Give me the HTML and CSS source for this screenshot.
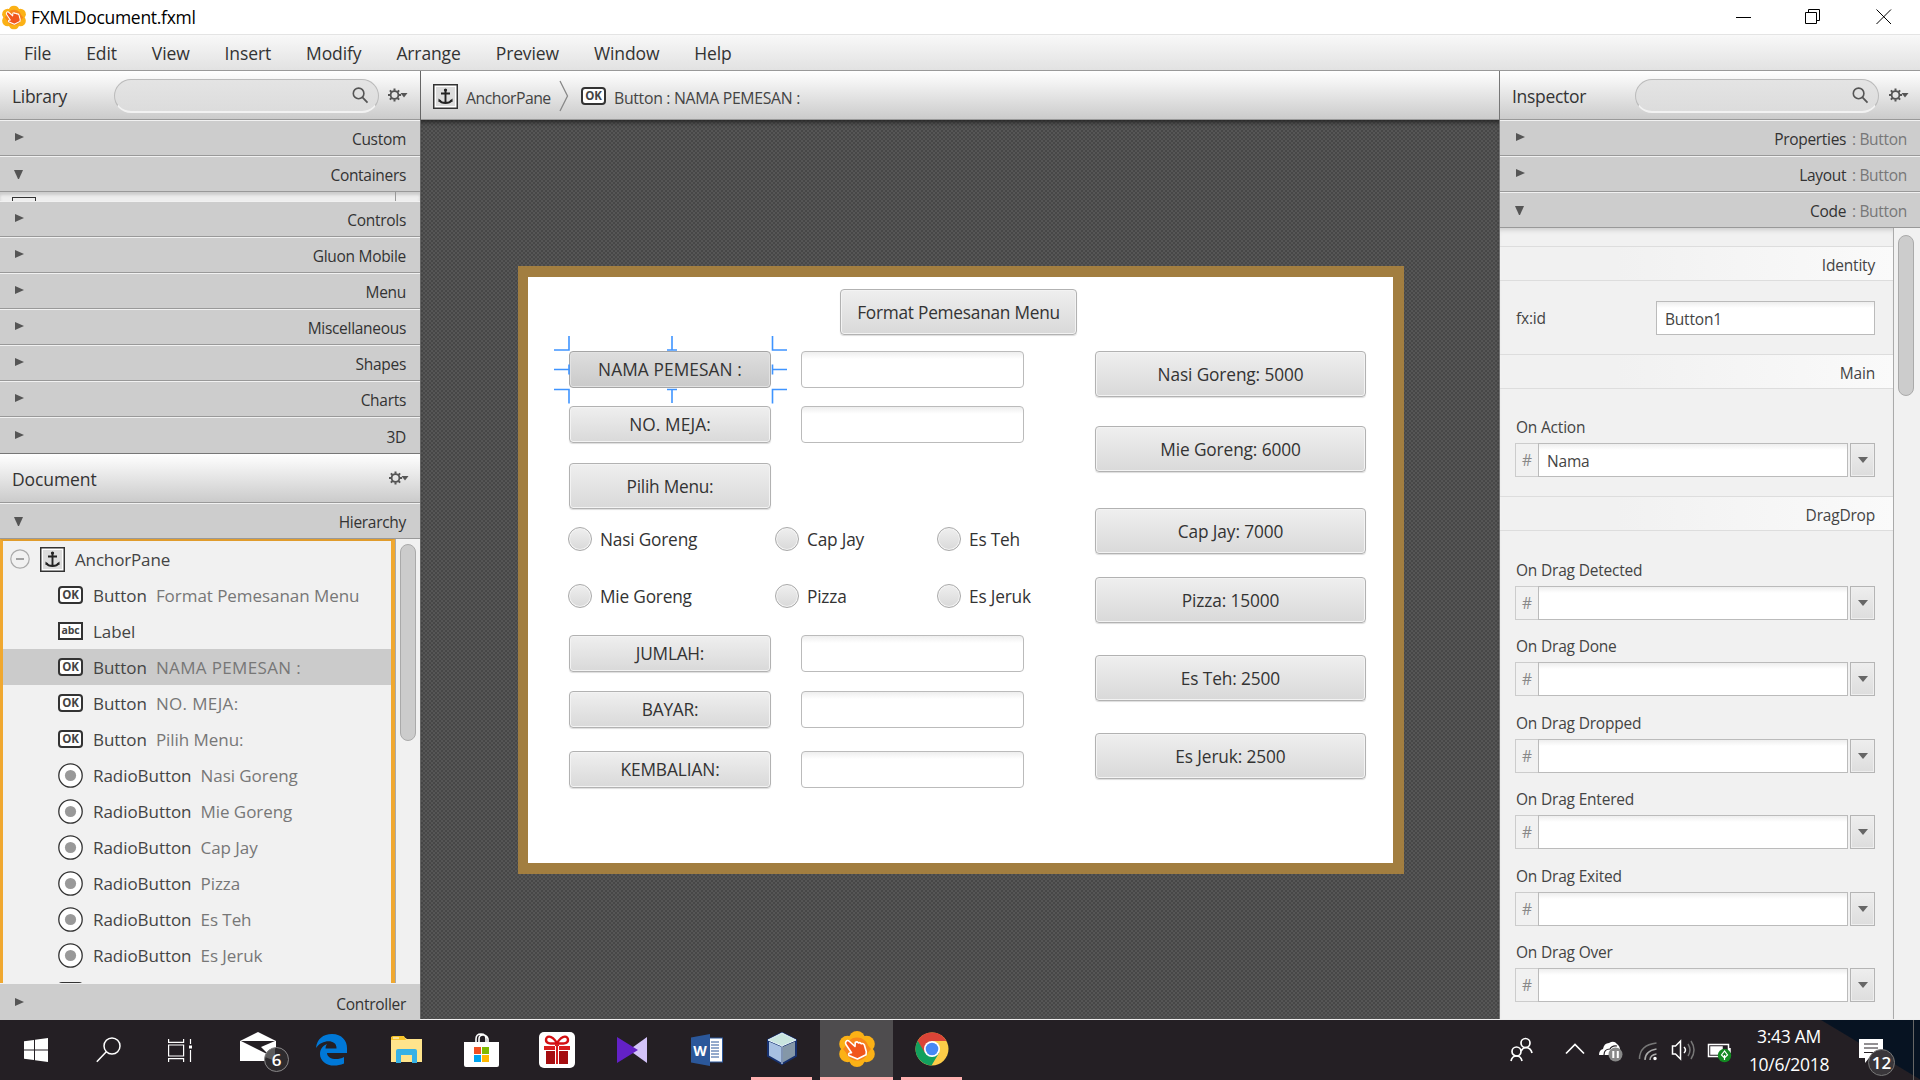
FILE: index.html
```html
<!DOCTYPE html>
<html lang="en">
<head>
<meta charset="utf-8">
<title>FXMLDocument.fxml</title>
<link rel="stylesheet" href="styles.css">
</head>
<body>
<svg width="0" height="0" class="defs">
  <symbol id="search" viewBox="0 0 17 17"><circle cx="6.6" cy="6.4" r="5.3" fill="none" stroke="#555" stroke-width="1.6"/><path d="M10.5 10.4l5 5.2" stroke="#555" stroke-width="1.8"/></symbol>
  <symbol id="gear" viewBox="0 0 20 14"><circle cx="6.5" cy="7" r="3.9" fill="none" stroke="#555" stroke-width="1.8"/><path d="M6.5 .4v2.4M6.5 11.2v2.4M-.1 7h2.4M10.7 7h2.4M1.9 2.4l1.6 1.6M9.5 10l1.6 1.6M11.1 2.4L9.5 4M3.5 10l-1.6 1.6" stroke="#555" stroke-width="2"/><path d="M12.5 5h7l-3.5 4.5z" fill="#555"/></symbol>
  <symbol id="anchor" viewBox="0 0 25 25"><rect x=".75" y=".75" width="23.5" height="23.5" fill="#fff" stroke="#333" stroke-width="1.5"/><rect x="3" y="3" width="19" height="19" fill="#ddd"/><path d="M12.5 5v14M8 9.5h9M6.5 16.3q1.5 2.7 6 2.7t6-2.7" fill="none" stroke="#222" stroke-width="1.9"/><path d="M5.5 14.5v3.5l3-1zM19.5 14.5v3.5l-3-1z" fill="#222"/><circle cx="12.5" cy="6" r="1.6" fill="#222"/></symbol>
  <symbol id="radio" viewBox="0 0 25 25"><circle cx="12.5" cy="12.5" r="11.7" fill="#fff" stroke="#333" stroke-width="1.3"/><circle cx="12.5" cy="12.5" r="5.6" fill="#999"/></symbol>
  <symbol id="gluon" viewBox="0 0 36 36"><g fill="#fbb116"><circle cx="18" cy="8" r="8"/><circle cx="18" cy="28" r="8"/><circle cx="8.5" cy="13" r="8.3"/><circle cx="27.5" cy="13" r="8.3"/><circle cx="8.5" cy="23" r="8.3"/><circle cx="27.5" cy="23" r="8.3"/></g><g fill="#f7861c"><circle cx="18" cy="18" r="11.5"/><path d="M4 18l7-8 0 16zM32 18l-7-8 0 16z"/></g><path d="M7 10.5q1.500-2 3.500 0l5.500 5 .3-4q2-1.500 3 .5 2-1 3 .8 2-.8 3 1l2 7-.3 3-8.500 4.200-2.500-1-6-2.500q-1.500-2.500 2.500-2.800L7 13.500q-1-1.500 0-3z" fill="#f1551c" stroke="#fff" stroke-width="1.600" stroke-linejoin="round"/></symbol>
</svg>

<header class="titlebar">
  <svg class="app-icon" viewBox="0 0 36 36"><use href="#gluon"/></svg>
  <span class="title">FXMLDocument.fxml</span>
  <svg class="window-controls" viewBox="0 0 156 16" fill="none" stroke="#000"><path d="M0 8.500h15"/><path d="M69.500 3.500h11v11h-11zM72.500 3.500v-3h11v11h-3M140.500 .5l14.500 14.500M155 .5l-14.500 14.500"/></svg>
</header>
<nav class="menubar"><span>File</span><span>Edit</span><span>View</span><span>Insert</span><span>Modify</span><span>Arrange</span><span>Preview</span><span>Window</span><span>Help</span></nav>

<main class="workspace">
  <aside class="left">
    <div class="toolbar"><span class="tool-title">Library</span><div class="search"><svg><use href="#search"/></svg></div><svg class="gear"><use href="#gear"/></svg></div>
    <div class="section"><i class="closed"></i><span>Custom</span></div>
    <div class="section"><i class="open"></i><span>Containers</span></div>
    <div class="sliver"><i></i><b></b></div>
    <div class="section"><i class="closed"></i><span>Controls</span></div>
    <div class="section"><i class="closed"></i><span>Gluon Mobile</span></div>
    <div class="section"><i class="closed"></i><span>Menu</span></div>
    <div class="section"><i class="closed"></i><span>Miscellaneous</span></div>
    <div class="section"><i class="closed"></i><span>Shapes</span></div>
    <div class="section"><i class="closed"></i><span>Charts</span></div>
    <div class="section last"><i class="closed"></i><span>3D</span></div>
    <div class="toolbar"><span class="tool-title doc">Document</span><svg class="gear"><use href="#gear"/></svg></div>
    <div class="section"><i class="open"></i><span>Hierarchy</span></div>
    <div class="hierarchy">
      <div class="tree">
        <div class="node root"><svg class="collapse" viewBox="0 0 20 20"><circle cx="10" cy="10" r="9.200" fill="none" stroke="#aaa" stroke-width="1.200"/><path d="M6 10h8" stroke="#777" stroke-width="1.300"/></svg><svg class="icon"><use href="#anchor"/></svg><span>AnchorPane</span></div>
        <div class="node"><b class="ok">OK</b><span>Button</span><em>Format Pemesanan Menu</em></div>
        <div class="node"><b class="ok abc">abc</b><span>Label</span></div>
        <div class="node selected"><b class="ok">OK</b><span>Button</span><em class="caps">NAMA PEMESAN :</em></div>
        <div class="node"><b class="ok">OK</b><span>Button</span><em class="caps">NO. MEJA:</em></div>
        <div class="node"><b class="ok">OK</b><span>Button</span><em>Pilih Menu:</em></div>
        <div class="node"><svg class="icon"><use href="#radio"/></svg><span>RadioButton</span><em>Nasi Goreng</em></div>
        <div class="node"><svg class="icon"><use href="#radio"/></svg><span>RadioButton</span><em>Mie Goreng</em></div>
        <div class="node"><svg class="icon"><use href="#radio"/></svg><span>RadioButton</span><em>Cap Jay</em></div>
        <div class="node"><svg class="icon"><use href="#radio"/></svg><span>RadioButton</span><em>Pizza</em></div>
        <div class="node"><svg class="icon"><use href="#radio"/></svg><span>RadioButton</span><em>Es Teh</em></div>
        <div class="node"><svg class="icon"><use href="#radio"/></svg><span>RadioButton</span><em>Es Jeruk</em></div>
        <div class="node"><b class="ok"></b></div>
      </div>
      <div class="track"><div class="thumb"></div></div>
    </div>
    <div class="section controller"><i class="closed"></i><span>Controller</span></div>
  </aside>

  <section class="center">
    <div class="toolbar crumbs"><svg class="icon"><use href="#anchor"/></svg><span class="c1">AnchorPane</span><svg class="chev" viewBox="0 0 10 32" fill="none" stroke="#888" stroke-width="1.300"><path d="M1 1l7.500 15-7.500 15"/></svg><b class="ok">OK</b><span class="c2">Button : NAMA PEMESAN :</span></div>
    <div class="canvas">
      <div class="stage">
        <div class="btn format">Format Pemesanan Menu</div>
        <div class="btn l nama caps">NAMA PEMESAN :</div><div class="field nama"></div>
        <div class="btn l meja caps">NO. MEJA:</div><div class="field meja"></div>
        <div class="btn l pilih">Pilih Menu:</div>
        <div class="rb col1 row1"><i></i>Nasi Goreng</div><div class="rb col2 row1"><i></i>Cap Jay</div><div class="rb col3 row1"><i></i>Es Teh</div>
        <div class="rb col1 row2"><i></i>Mie Goreng</div><div class="rb col2 row2"><i></i>Pizza</div><div class="rb col3 row2"><i></i>Es Jeruk</div>
        <div class="btn l jumlah">JUMLAH:</div><div class="field jumlah"></div>
        <div class="btn l bayar">BAYAR:</div><div class="field bayar"></div>
        <div class="btn l kembalian">KEMBALIAN:</div><div class="field kembalian"></div>
        <div class="btn r p1">Nasi Goreng: 5000</div>
        <div class="btn r p2">Mie Goreng: 6000</div>
        <div class="btn r p3">Cap Jay: 7000</div>
        <div class="btn r p4">Pizza: 15000</div>
        <div class="btn r p5">Es Teh: 2500</div>
        <div class="btn r p6">Es Jeruk: 2500</div>
        <svg class="handles" viewBox="0 0 234 70" fill="none" stroke="#3f94ff" stroke-width="1.600"><path d="M0 15h15V1M233 15h-14.500V1M0 54.500h15v14M233 54.500h-14.500v14M118 1v14M113 15h10M118 68V54.500M113 54.500h10M0 34.500h15M15 29.500v10M233 34.500h-14.500M218.500 29.500v10"/></svg>
      </div>
    </div>
  </section>

  <aside class="right">
    <div class="toolbar"><span class="tool-title">Inspector</span><div class="search"><svg><use href="#search"/></svg></div><svg class="gear"><use href="#gear"/></svg></div>
    <div class="section"><i class="closed"></i><span>Properties <em>: Button</em></span></div>
    <div class="section"><i class="closed"></i><span>Layout <em>: Button</em></span></div>
    <div class="section"><i class="open"></i><span>Code <em>: Button</em></span></div>
    <div class="inspector">
      <div class="props">
        <div class="band first">Identity</div>
        <div class="fxid"><span>fx:id</span><div class="input">Button1</div></div>
        <div class="band">Main</div>
        <div class="prop lead"><label>On Action</label><div class="combo"><b>#</b><div class="input">Nama</div><i></i></div></div>
        <div class="band">DragDrop</div>
        <div class="prop lead drag"><label>On Drag Detected</label><div class="combo"><b>#</b><div class="input"></div><i></i></div></div>
        <div class="prop"><label>On Drag Done</label><div class="combo"><b>#</b><div class="input"></div><i></i></div></div>
        <div class="prop"><label>On Drag Dropped</label><div class="combo"><b>#</b><div class="input"></div><i></i></div></div>
        <div class="prop"><label>On Drag Entered</label><div class="combo"><b>#</b><div class="input"></div><i></i></div></div>
        <div class="prop"><label>On Drag Exited</label><div class="combo"><b>#</b><div class="input"></div><i></i></div></div>
        <div class="prop"><label>On Drag Over</label><div class="combo"><b>#</b><div class="input"></div><i></i></div></div>
      </div>
      <div class="track"><div class="thumb"></div></div>
    </div>
  </aside>
</main>

<footer class="taskbar">
  <div class="task"><svg width="24" height="24" viewBox="0 0 24 24" fill="#fff"><path d="M0 3.300l10-1.400v9.600H0zM11 1.800L24 0v11.500H11zM0 12.500h10v9.600L0 20.700zM11 12.500h13V24l-13-1.800z"/></svg></div>
  <div class="task find"><svg width="26" height="26" viewBox="0 0 26 26" fill="none" stroke="#fff" stroke-width="1.500"><circle cx="16" cy="9" r="8"/><path d="M10.300 14.700L.8 24.800"/></svg></div>
  <div class="task view"><svg width="25" height="25" viewBox="0 0 25 25" fill="none" stroke="#fff" stroke-width="1.200"><path d="M.6 1v3.400h15V1M.6 7h15v11H.6zM.6 24v-3.400h15V24M22.500 1v5M22.500 12v12"/><path d="M21 7.500h3v3h-3z" fill="#fff" stroke="none"/></svg></div>
  <div class="task mail"><svg width="50" height="41" viewBox="0 0 50 41"><path d="M1 10L19 1l18 9v20H1z" fill="#fff"/><path d="M2 10h34L22 16l8 8z" fill="#241f24"/><circle cx="37.500" cy="28.500" r="12" fill="#2e2b2e" stroke="#8a888a"/><path d="M26 26q1.500-8 10-9v13z" fill="#777" opacity=".65"/><text x="37.500" y="35" text-anchor="middle" class="badge">6</text></svg></div>
  <div class="task"><svg width="31" height="32" viewBox="0 0 31 32"><path d="M0 14C1 5 7 0 16 0c10 0 15 7 15 14v5H11c0 6 10 8 17 4v6.500C15 35 4 29 4 20c0-5 3-8.500 7-10-1 1.500-1.600 3-1.500 4.500h11C21 5 6 5 0 14z" fill="#0078d7"/></svg></div>
  <div class="task"><svg width="33" height="28" viewBox="0 0 33 28"><path d="M1 1h13l3 2h15v23H1z" fill="#ffe48c"/><path d="M1 1.500Q1 0 3 0h11l2 4H1z" fill="#f8c52b"/><path d="M3 2h6" stroke="#fff"/><path d="M6 27V15q0-2 2-2h17q2 0 2 2v12h-5v-8H11v8z" fill="#36b1e6"/></svg></div>
  <div class="task"><svg width="35" height="34" viewBox="0 0 35 34"><path d="M12 9V6q0-5 5-5t5 5v3M15 9V6q0-4 4-4t5 4v3" fill="none" stroke="#fff" stroke-width="1.600"/><path d="M0 9h35v23q0 2-2 2H2q-2 0-2-2z" fill="#fff"/><path d="M10 14h7v7h-7z" fill="#f25022"/><path d="M18 14h7v7h-7z" fill="#7fba00"/><path d="M10 22h7v7h-7z" fill="#00a4ef"/><path d="M18 22h7v7h-7z" fill="#ffb900"/></svg></div>
  <div class="task"><svg width="36" height="36" viewBox="0 0 36 36"><rect width="36" height="36" rx="5" fill="#fff"/><path d="M18 11C12 2 7 4 7 8s6 4 11 3c5 1 11 1 11-3s-5-6-11 3z" fill="none" stroke="#d40f12" stroke-width="2.400"/><path d="M5 14h11v4H5zM20 14h11v4H20zM16 12h4v20h-4z" fill="#d91c1c"/><path d="M7 19h9v13H7zM20 19h9v13h-9z" fill="#a50d10"/><path d="M16.500 14v18M19.500 14v18" stroke="#fff"/></svg></div>
  <div class="task"><svg width="30" height="26" viewBox="0 0 30 26"><path d="M30 0v26L12 13z" fill="#d3c3f9"/><path d="M0 0l21 13L0 26z" fill="#6321c6"/></svg></div>
  <div class="task"><svg width="32" height="32" viewBox="0 0 32 32"><rect x="16" y="4" width="15.500" height="24" fill="#fff" stroke="#2b579a"/><path d="M20 8h8M20 11h8M20 14h8M20 17h8M20 20h8M20 23h8" stroke="#2b579a"/><path d="M0 3.500L19 0v32L0 28.500z" fill="#2b579a"/><text x="9" y="21.500" text-anchor="middle" class="word">W</text></svg></div>
  <div class="task running"><svg width="34" height="36" viewBox="0 0 34 36"><g stroke="#16306e" stroke-width="2" stroke-linejoin="round"><path d="M3 9l14-7 14 7-14 6z" fill="#c7e6e0"/><path d="M3 9l14 6v18L3 25z" fill="#a7c0e2"/><path d="M31 9l-14 6v18l14-8z" fill="#8497a8"/></g><path d="M3 9l14-7 14 7-14 6zM17 15v18" fill="#c9e5df" stroke="#e8f6fb"/></svg></div>
  <div class="task running active"><svg width="36" height="36"><use href="#gluon"/></svg></div>
  <div class="task running"><svg width="34" height="34" viewBox="0 0 34 34"><circle cx="17" cy="17" r="16.500" fill="#fccc48"/><path d="M17 17L2.700 8.700A16.500 16.500 0 0 0 16.500 33.500L24 21z" fill="#12a05e"/><path d="M2.700 8.700A16.500 16.500 0 0 1 31.500 9H17L10 21z" fill="#da4437"/><circle cx="17" cy="17" r="8" fill="#fff"/><circle cx="17" cy="17" r="6.300" fill="#4688f4"/></svg></div>
  <svg class="tray" width="230" height="60" viewBox="0 0 230 60" fill="none" stroke="#fff" stroke-width="1.700"><circle cx="16.500" cy="23" r="4.500"/><path d="M12 31q2-3.500 5-3.500 5 .5 6 5.500"/><circle cx="7.500" cy="31.500" r="4.500"/><path d="M2 41q1-5 5.500-5t5.500 5"/><path d="M57 33.500l9-9 9 9"/><path d="M90 35q0-5 4-6 1-6 6-6 5-3 8 1 3 2 3 6v5z" fill="#fff" stroke="none"/><path d="M95 35q0-6 6-6 2-4 7-3" stroke="#241f24" stroke-width="1.200"/><circle cx="106.500" cy="34.500" r="7" fill="#888" stroke="none"/><path d="M104.300 31v7M108.800 31v7" stroke-width="2"/><g stroke-width="1.500"><path d="M130.500 39q0-14 17-16" stroke="#777"/><path d="M136 40q0-9 11.500-11M141 40q0-5 6.500-6" stroke="#aaa"/><circle cx="146" cy="38.500" r="1" fill="#fff"/><path d="M163.500 26h3l5-5v18l-5-5h-3z"/><path d="M175 27q3 3 0 6"/><path d="M179 24q4 6 0 12M182 21q6 9 0 18" stroke="#777"/><path d="M199.500 24.500h20v12h-20zM221 28v5"/><path d="M202 27h11v7h-11z" fill="#fff"/></g><circle cx="215.500" cy="35.500" r="6.700" fill="#138a22" stroke="none"/><path d="M215.500 31l-3 4 3 3 3-3zM215.500 35v5" stroke-width="1.200"/></svg>
  <div class="clock"><span>3:43 AM</span><span>10/6/2018</span></div>
  <svg class="action" width="40" height="40" viewBox="0 0 40 40"><path d="M1 1h24v19H11l-4 5v-5H1z" fill="#fff"/><path d="M6 6h14M6 10h14M6 14.500h14" stroke="#241f24"/><circle cx="23.500" cy="24.500" r="13" fill="#39363a" stroke="#777"/><text x="23.500" y="31" text-anchor="middle" class="badge">12</text></svg>
  <div class="peek"></div>
</footer>
</body>
</html>
```
FILE: styles.css
```css
* { box-sizing: border-box; }
body { margin: 0; width: 1920px; height: 1080px; overflow: hidden; display: flex; flex-direction: column; font: 17px "Open Sans", "Noto Sans", sans-serif; color: #333; background: #fff; }
em { font-style: normal; }
svg { display: block; flex: none; }
.defs { display: none; }
.titlebar { height: 34px; flex: none; display: flex; align-items: center; background: #fff; }
.app-icon { width: 24px; height: 25px; margin-left: 2px; }
.title { margin-left: 5px; color: #000; font-size: 17.5px; letter-spacing: -.3px; }
.window-controls { width: 156px; height: 16px; margin-left: auto; margin-right: 28px; }
.menubar { height: 37px; flex: none; display: flex; align-items: center; padding-left: 24px; gap: 35px; border-top: 1px solid #e4e4e4; border-bottom: 1px solid #999; background: linear-gradient(#f8f8f8, #e2e2e2); font-size: 17.5px; letter-spacing: -.12px; }
.workspace { height: 949px; flex: none; display: flex; border-bottom: 1px solid #eee; }
.left { width: 421px; display: flex; flex-direction: column; border-right: 1px solid #666; }
.center { width: 1078px; display: flex; flex-direction: column; }
.right { width: 421px; display: flex; flex-direction: column; border-left: 1px solid #777; }
.toolbar { height: 49px; flex: none; display: flex; align-items: center; padding-top: 2px; background: linear-gradient(#fff, #cbcbcb); border-bottom: 1px solid #999; }
.tool-title { width: 102px; padding-left: 12px; font-size: 17.5px; letter-spacing: -.3px; }
.tool-title.doc { width: 376px; letter-spacing: -.1px; }
.search { width: 265px; height: 34px; border-radius: 17px; border: 1px solid #bbb; border-bottom: 2px solid #f2f2f2; background: linear-gradient(#e4e4e4, #dcdcdc); display: flex; justify-content: flex-end; align-items: center; padding-right: 9px; }
.search svg { width: 17px; height: 17px; }
.gear { width: 20px; height: 14px; margin: 0 0 2px 9px; }
.right .gear { margin-left: 10px; }
.doc + .gear { margin-left: 13px; }
.left .toolbar:first-child .search { margin-left: 12px; }
.right .tool-title { width: 135px; }
.right .search { width: 244px; }
.section { height: 36px; flex: none; display: flex; align-items: center; justify-content: space-between; padding: 2px 14px 0 16px; background: #cdcdcd; border-top: 1px solid #f1f1f1; border-bottom: 1px solid #999; font-size: 15.5px; letter-spacing: -.3px; }
.section em { color: #777; margin-left: 2px; }
.closed { width: 9px; margin: 0 0 4px -1px; border-left: 9px solid #555; border-top: 4.5px solid transparent; border-bottom: 4.5px solid transparent; }
.open { width: 9px; margin: 0 0 2px -2px; border-top: 9px solid #555; border-left: 4.5px solid transparent; border-right: 4.5px solid transparent; }
.sliver { height: 9px; flex: none; display: flex; background: #eee; box-shadow: inset 0 3px 3px #ccc; align-items: flex-end; }
.sliver i { width: 24px; height: 4px; margin-left: 12px; border: 1px solid #333; border-bottom: 0; }
.sliver b { width: 1px; height: 9px; margin-left: 359px; background: #999; }
.section.last { height: 37px; border-bottom-color: #777; }
.hierarchy { height: 444px; flex: none; display: flex; background: #f1f1f1; overflow: hidden; }
.tree { width: 395px; height: 446px; border-left: 3px solid #f0a830; border-top: 2px solid #e09c2c; border-right: 4px solid #f0a830; }
.node { height: 36px; display: flex; align-items: center; padding-left: 55px; color: #444; }
.node span { margin-left: 10px; letter-spacing: -.05px; }
.node em { margin-left: 9px; color: #777; letter-spacing: -.05px; }
.node em.caps { letter-spacing: .35px; }
.node .icon, .crumbs .icon { width: 25px; height: 25px; }
.root { padding-left: 7px; }
.root .icon + span, .root span { letter-spacing: -.15px; }
.collapse { width: 20px; height: 20px; margin-right: 10px; }
.selected { background: #cbcbcb; }
.ok { width: 25px; height: 18px; flex: none; border: 2px solid #333; border-radius: 4px; background: #fff; font: 700 11.5px/14px "Open Sans", sans-serif; text-align: center; letter-spacing: -.2px; }
.abc { border-radius: 0; font-size: 10.5px; line-height: 13px; }
.track { flex: 1; border-left: 1px solid #aaa; padding: 5px 0 0 4px; background: #f1f1f1; }
.thumb { width: 16px; height: 197px; border: 1px solid #aaa; border-radius: 8px; background: #ccc; }
.controller { height: 38px; border-bottom: 0; }
.crumbs { padding-left: 12px; padding-top: 3px; font-size: 15.8px; letter-spacing: -.5px; color: #444; }
.crumbs span { padding-top: 2px; }
.crumbs svg, .crumbs b { margin-bottom: 1px; }
.c1 { width: 93px; margin-left: 8px; }
.chev { width: 10px; height: 32px; margin-right: 12px; }
.c2 { margin-left: 8px; letter-spacing: -.3px; }
.canvas { flex: 1; padding: 146px 0 0 97px; background: repeating-conic-gradient(#474747 0 25%, #565656 0 50%) 0 0 / 4px 4px; box-shadow: inset 0 5px 5px -3px #222; }
.stage { position: relative; width: 886px; height: 608px; border: 11px solid #a27e40; border-left-width: 10px; background: #fff; }
/* The designed form is a free canvas: its controls carry their own coordinates. */
.btn, .field, .rb, .handles { position: absolute; }
.btn { display: flex; align-items: center; justify-content: center; border: 1px solid #b2b2b2; border-radius: 4px; background: linear-gradient(#efefef, #d9d9d9); box-shadow: inset 0 0 0 1px #f3f3f3, 0 1px 1px #ddd; font-size: 17.3px; letter-spacing: -.25px; white-space: nowrap; }
.btn.caps { letter-spacing: .1px; }
.field { left: 273px; width: 223px; height: 37px; border: 1px solid #bbb; border-radius: 4px; background: linear-gradient(#eee, #fff 7px); }
.l { left: 41px; width: 202px; height: 37px; }
.r { left: 567px; width: 271px; height: 46px; letter-spacing: -.12px; }
.format { left: 312px; top: 12px; width: 237px; height: 46px; }
.nama { top: 74px; }
.btn.nama { background: linear-gradient(#dedede, #cacaca); box-shadow: inset 0 0 0 1px #e2e2e2; border-color: #a5a5a5; }
.meja { top: 129px; }
.pilih { top: 186px; height: 46px; }
.jumlah { top: 358px; }
.bayar { top: 414px; }
.kembalian { top: 474px; letter-spacing: -.1px; }
.p1 { top: 74px; } .p2 { top: 149px; } .p3 { top: 231px; } .p4 { top: 300px; } .p5 { top: 378px; } .p6 { top: 456px; }
.rb { height: 24px; display: flex; align-items: center; gap: 8px; font-size: 17.3px; letter-spacing: -.2px; white-space: nowrap; }
.rb i { width: 24px; height: 24px; border-radius: 50%; border: 1px solid #aaa; background: linear-gradient(#efefef, #d9d9d9); box-shadow: inset 0 0 0 1px #f3f3f3; }
.col1 { left: 40px; } .col2 { left: 247px; } .col3 { left: 409px; }
.row1 { top: 250px; } .row2 { top: 307px; }
.handles { left: 26px; top: 58px; width: 234px; height: 70px; }
.inspector { height: 791px; display: flex; overflow: hidden; background: #f1f1f1; font-size: 15.5px; letter-spacing: -.2px; color: #444; }
.props { width: 393px; padding-top: 18px; box-shadow: inset 0 5px 5px -3px #ccc; }
.right .section { padding-left: 17px; padding-right: 13px; }
.right .section span { white-space: pre; }
.band { height: 35px; display: flex; align-items: center; justify-content: flex-end; padding: 3px 18px 0 0; border: solid #ddd; border-width: 1px 0; background: linear-gradient(90deg, #f1f1f1 30%, #fafafa); }
.fxid { height: 73px; display: flex; align-items: center; padding: 1px 18px 0 16px; justify-content: space-between; }
.input { height: 34px; width: 219px; border: 1px solid #bbb; padding: 2px 8px 0; background: linear-gradient(#eee, #fff 6px); display: flex; align-items: center; }
.prop { height: 76.5px; padding-left: 15px; }
.prop.lead { height: 107px; padding-top: 24px; }
.prop.drag { height: 101px; padding-top: 25px; }
.prop label { display: block; height: 30px; padding-left: 1px; line-height: 28px; }
.combo { display: flex; height: 34px; }
.combo b { width: 23px; border: 1px solid #ccc; border-right: 0; line-height: 33px; text-align: center; font-weight: 400; color: #888; }
.combo .input { width: 310px; }
.combo i { width: 25px; height: 34px; margin-left: 2px; border: 1px solid #b5b5b5; background: linear-gradient(#eee, #ddd); display: flex; align-items: center; justify-content: center; box-shadow: inset 0 0 0 1px #eee; }
.combo i::after { content: ""; border-top: 6px solid #666; border-left: 5px solid transparent; border-right: 5px solid transparent; }
.right .thumb { height: 161px; margin-top: 2px; }
.taskbar { height: 60px; flex: none; display: flex; background: linear-gradient(to top right, transparent 50%, #071322 51%) right / 100px 60px no-repeat, #241f24; color: #fff; }
.task { width: 75px; height: 60px; display: flex; align-items: center; justify-content: center; }
.task:first-child { width: 72px; }
.task.find { width: 73px; }
.task.view { width: 71px; margin-right: 3px; }
.mail svg { margin-left: 14px; margin-top: 2px; }
.task.running { border-bottom: 3px solid #ffb0b0; width: 61px; margin: 0 7px; }
.task.running.active { width: 73px; margin: 0 1px; background: #4e4c4e; }
.badge { font: 600 17px "Open Sans", sans-serif; fill: #fff; }
.word { font: 700 14px "Open Sans", sans-serif; fill: #fff; }
.tray { margin-left: auto; }
.clock { width: 100px; display: flex; flex-direction: column; align-items: center; justify-content: center; line-height: 28px; font-size: 17.5px; letter-spacing: -.3px; }
.action { margin: 18px 0 0 19px; }
.peek { width: 1px; background: #666; margin: 0 6px 0 15px; }
```
